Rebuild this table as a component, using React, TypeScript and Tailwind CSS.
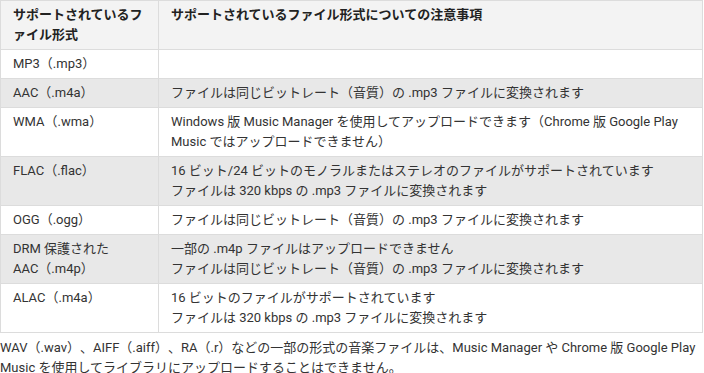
import React from "react";

type Row = { fmt: React.ReactNode; note: React.ReactNode; shade?: boolean };

const rows: Row[] = [
  { fmt: "MP3（.mp3）", note: "" },
  { fmt: "AAC（.m4a）", note: "ファイルは同じビットレート（音質）の .mp3 ファイルに変換されます", shade: true },
  {
    fmt: "WMA（.wma）",
    note: "Windows 版 Music Manager を使用してアップロードできます（Chrome 版 Google Play Music ではアップロードできません）",
  },
  {
    fmt: "FLAC（.flac）",
    note: (
      <>
        16 ビット/24 ビットのモノラルまたはステレオのファイルがサポートされています
        <br />
        ファイルは 320 kbps の .mp3 ファイルに変換されます
      </>
    ),
    shade: true,
  },
  { fmt: "OGG（.ogg）", note: "ファイルは同じビットレート（音質）の .mp3 ファイルに変換されます" },
  {
    fmt: (
      <>
        DRM 保護された
        <br />
        AAC（.m4p）
      </>
    ),
    note: (
      <>
        一部の .m4p ファイルはアップロードできません
        <br />
        ファイルは同じビットレート（音質）の .mp3 ファイルに変換されます
      </>
    ),
    shade: true,
  },
  {
    fmt: "ALAC（.m4a）",
    note: (
      <>
        16 ビットのファイルがサポートされています
        <br />
        ファイルは 320 kbps の .mp3 ファイルに変換されます
      </>
    ),
  },
];

export default function App() {
  return (
    <div className="w-[704px] bg-white text-[13px] leading-5 text-[#333] [text-spacing-trim:space-all] font-['Roboto','Noto_Sans_CJK_JP',sans-serif]">
      <table className="w-[703px] border-collapse table-fixed">
        <colgroup>
          <col className="w-[158px]" />
          <col />
        </colgroup>
        <thead>
          <tr className="bg-[#f3f3f3]">
            <th className="border border-[#dcdcdc] px-3 py-[4px] text-left align-top font-bold text-[#222]">
              サポートされているファイル形式
            </th>
            <th className="border border-[#dcdcdc] px-3 py-[4px] text-left align-top font-bold text-[#222]">
              サポートされているファイル形式についての注意事項
            </th>
          </tr>
        </thead>
        <tbody>
          {rows.map((r, i) => (
            <tr key={i} className={r.shade ? "bg-[#e8e8e8]" : "bg-white"}>
              <td className="border border-[#dcdcdc] px-3 py-[4px] align-top">{r.fmt}</td>
              <td className="border border-[#dcdcdc] px-3 py-[4px] align-top">{r.note}</td>
            </tr>
          ))}
        </tbody>
      </table>
      <p className="mt-[5px] leading-5">
        WAV（.wav）、AIFF（.aiff）、RA（.r）などの一部の形式の音楽ファイルは、Music Manager や Chrome 版 Google Play Music を使用してライブラリにアップロードすることはできません。
      </p>
    </div>
  );
}
